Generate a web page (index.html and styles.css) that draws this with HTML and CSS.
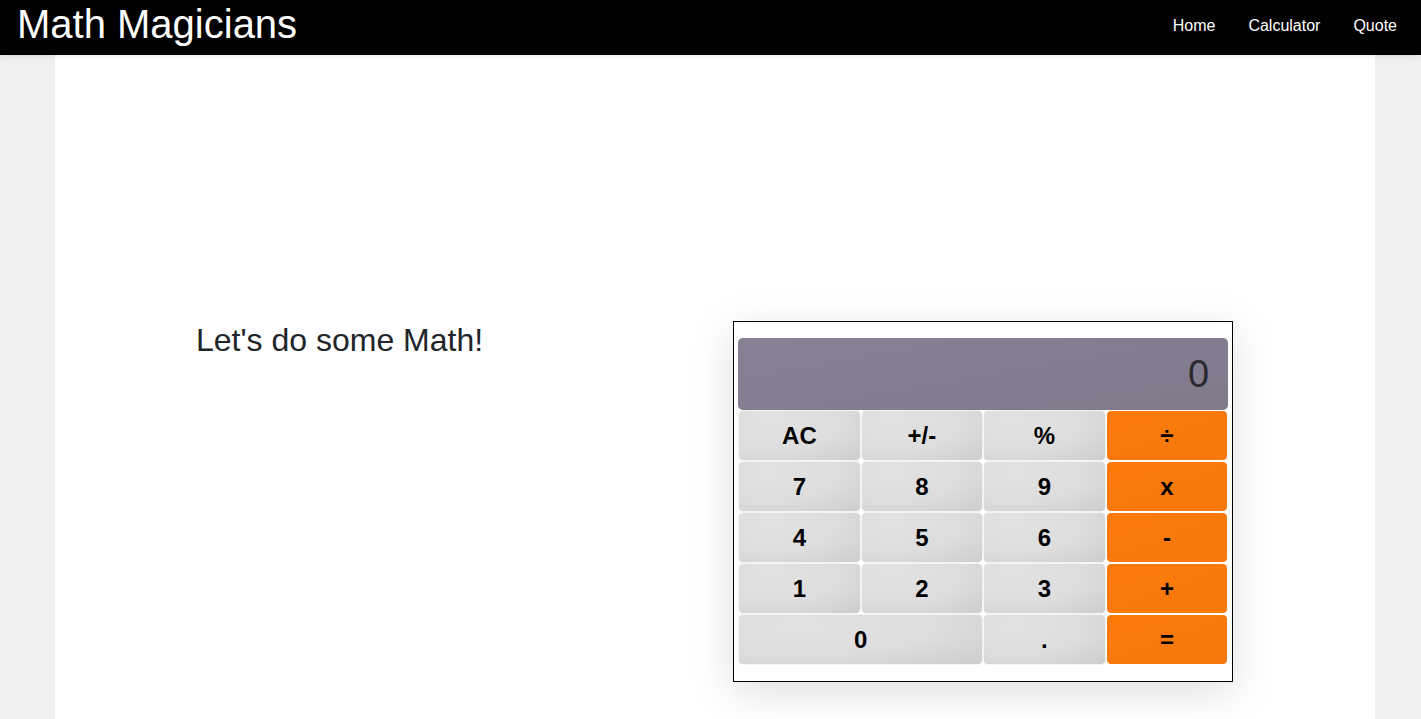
FILE: index.html
```html
<!DOCTYPE html>
<html lang="en">
<head>
<meta charset="utf-8">
<title>Math Magicians</title>
<link rel="stylesheet" href="styles.css">
</head>
<body>
<header class="navbar">
  <h1 class="brand">Math Magicians</h1>
  <nav class="nav">
    <a href="#" class="nav-link">Home</a>
    <a href="#" class="nav-link">Calculator</a>
    <a href="#" class="nav-link">Quote</a>
  </nav>
</header>
<main class="container">
  <section class="calc-page">
    <h2 class="title">Let's do some Math!</h2>
    <div class="calculator">
      <div class="display">0</div>
      <div class="keys">
        <button class="key">AC</button>
        <button class="key">+/-</button>
        <button class="key">%</button>
        <button class="key op">÷</button>
        <button class="key">7</button>
        <button class="key">8</button>
        <button class="key">9</button>
        <button class="key op">x</button>
        <button class="key">4</button>
        <button class="key">5</button>
        <button class="key">6</button>
        <button class="key op">-</button>
        <button class="key">1</button>
        <button class="key">2</button>
        <button class="key">3</button>
        <button class="key op">+</button>
        <button class="key wide">0</button>
        <button class="key">.</button>
        <button class="key op">=</button>
      </div>
    </div>
  </section>
</main>
</body>
</html>
```

FILE: styles.css
```css
* { box-sizing: border-box; }
html, body { margin: 0; padding: 0; }
body {
  background: #f0f0f0;
  font-family: "Liberation Sans", Arial, sans-serif;
  color: #212529;
  min-height: 719px;
  overflow: hidden;
}
.navbar {
  height: 55px;
  background: #000;
  display: flex;
  align-items: center;
  justify-content: space-between;
  padding: 0 24px 0 17px;
  position: relative;
  z-index: 2;
  box-shadow: 0 2px 6px rgba(0,0,0,0.08);
}
.brand {
  margin: 0;
  font-size: 40px;
  font-weight: 400;
  color: #fff;
  line-height: 1;
  margin-top: -8px;
}
.nav { display: flex; gap: 33px; }
.nav-link {
  color: #fff;
  text-decoration: none;
  font-size: 16px;
  margin-top: -3px;
}
.container {
  width: 1320px;
  margin: 0 0 0 55px;
  background: #fff;
  height: 664px;
}
.calc-page {
  display: flex;
  align-items: flex-start;
  gap: 250px;
  padding: 266px 0 0 141px;
}
.title {
  margin: 0;
  font-size: 32px;
  font-weight: 400;
  line-height: 1.2;
}
.calculator {
  width: 500px;
  border: 1px solid #000;
  padding: 16px 4px;
  background: #fff;
  box-shadow: 0 10px 40px rgba(0,0,0,0.13);
}
.display {
  height: 72px;
  background: linear-gradient(170deg, #888096, #807a8a);
  border-radius: 5px;
  text-align: right;
  font-size: 38px;
  line-height: 64px;
  padding: 4px 19px 0 0;
  color: #2a2a30;
}
.keys {
  display: grid;
  grid-template-columns: repeat(4, 1fr);
  grid-auto-rows: 51px;
}
.key {
  font-family: "Liberation Sans", Arial, sans-serif;
  font-weight: 700;
  font-size: 24px;
  color: #000;
  border: 1px solid #f4f4f4;
  border-radius: 5px;
  background: radial-gradient(ellipse at 25% 20%, #e2e2e2 0%, #dddddd 55%, #cdcdcd 100%);
  padding: 0;
  margin: 0;
}
.op {
  background: linear-gradient(160deg, #fb7a0a, #f7780c);
  border-color: #fff;
}
.wide { grid-column: span 2; }
```
